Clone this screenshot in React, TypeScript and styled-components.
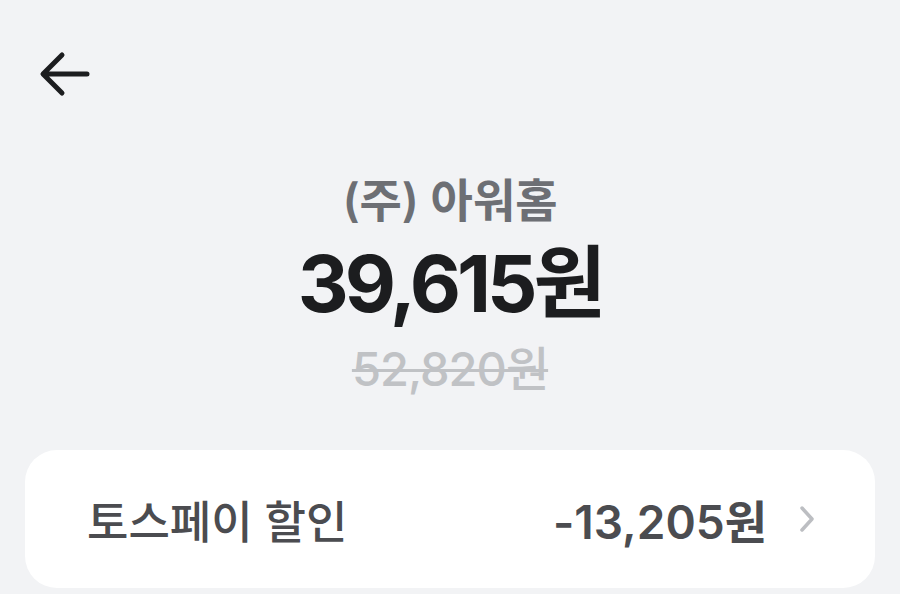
import React, { FC } from 'react'
import styled, { createGlobalStyle } from 'styled-components'

const GlobalStyle = createGlobalStyle`
  html, body {
    margin: 0;
    padding: 0;
    background: #f2f3f5;
  }
  body {
    font-family: Inter, 'Noto Sans CJK KR', 'Noto Sans', sans-serif;
    color: #1c1d1f;
  }
`

const BackArrow: FC = () => (
  <svg width='56' height='48' viewBox='0 0 56 48' fill='none'>
    <path
      d='M53 24H10M28 5L9 24l19 19'
      stroke='#1c1d1f'
      strokeWidth='5'
      strokeLinecap='round'
      strokeLinejoin='round'
    />
  </svg>
)

const Chevron: FC = () => (
  <svg width='20' height='30' viewBox='0 0 20 30' fill='none'>
    <path
      d='M5 4l10 11L5 26'
      stroke='#bcbec2'
      strokeWidth='3.5'
      strokeLinecap='round'
      strokeLinejoin='round'
    />
  </svg>
)

const App: FC = () => {
  return (
    <>
      <GlobalStyle />
      <Page>
        <TopBar>
          <BackButton aria-label='뒤로'>
            <BackArrow />
          </BackButton>
        </TopBar>
        <Summary>
          <Merchant>(주) 아워홈</Merchant>
          <Price>39,615원</Price>
          <OriginalPrice>52,820원</OriginalPrice>
        </Summary>
        <Card>
          <Row>
            <RowLabel>토스페이 할인</RowLabel>
            <RowValue>
              -13,205원
              <Chevron />
            </RowValue>
          </Row>
        </Card>
      </Page>
    </>
  )
}

const Page = styled.div`
  width: 900px;
  height: 594px;
  overflow: hidden;
  display: flex;
  flex-direction: column;
`

const TopBar = styled.div`
  height: 170px;
  padding: 50px 0 0 34px;
  box-sizing: border-box;
`

const BackButton = styled.button`
  border: none;
  background: none;
  padding: 0;
  display: flex;
  cursor: pointer;
`

const Summary = styled.div`
  display: flex;
  flex-direction: column;
  align-items: center;
`

const Merchant = styled.div`
  font-size: 46px;
  font-weight: 600;
  color: #6d6f74;
  line-height: 60px;
`

const Price = styled.div`
  font-size: 79px;
  font-weight: 700;
  color: #1c1d1f;
  line-height: 90px;
  margin-top: 8px;
  letter-spacing: -4px;
`

const OriginalPrice = styled.div`
  font-size: 47px;
  font-weight: 500;
  color: #c0c2c5;
  line-height: 56px;
  margin-top: 13px;
  letter-spacing: -1px;
  text-decoration: line-through;
  text-decoration-thickness: 3px;
`

const Card = styled.div`
  margin: 53px 25px 0;
  background: #ffffff;
  border-radius: 32px;
  height: 138px;
  flex-shrink: 0;
  display: flex;
  align-items: center;
`

const Row = styled.div`
  flex: 1;
  display: flex;
  align-items: center;
  justify-content: space-between;
  padding: 0 58px 0 62px;
`

const RowLabel = styled.div`
  font-size: 45px;
  font-weight: 500;
  color: #4b4c50;
`

const RowValue = styled.div`
  display: flex;
  align-items: center;
  gap: 30px;
  font-size: 46px;
  font-weight: 600;
  color: #4b4c50;
`

export default App
